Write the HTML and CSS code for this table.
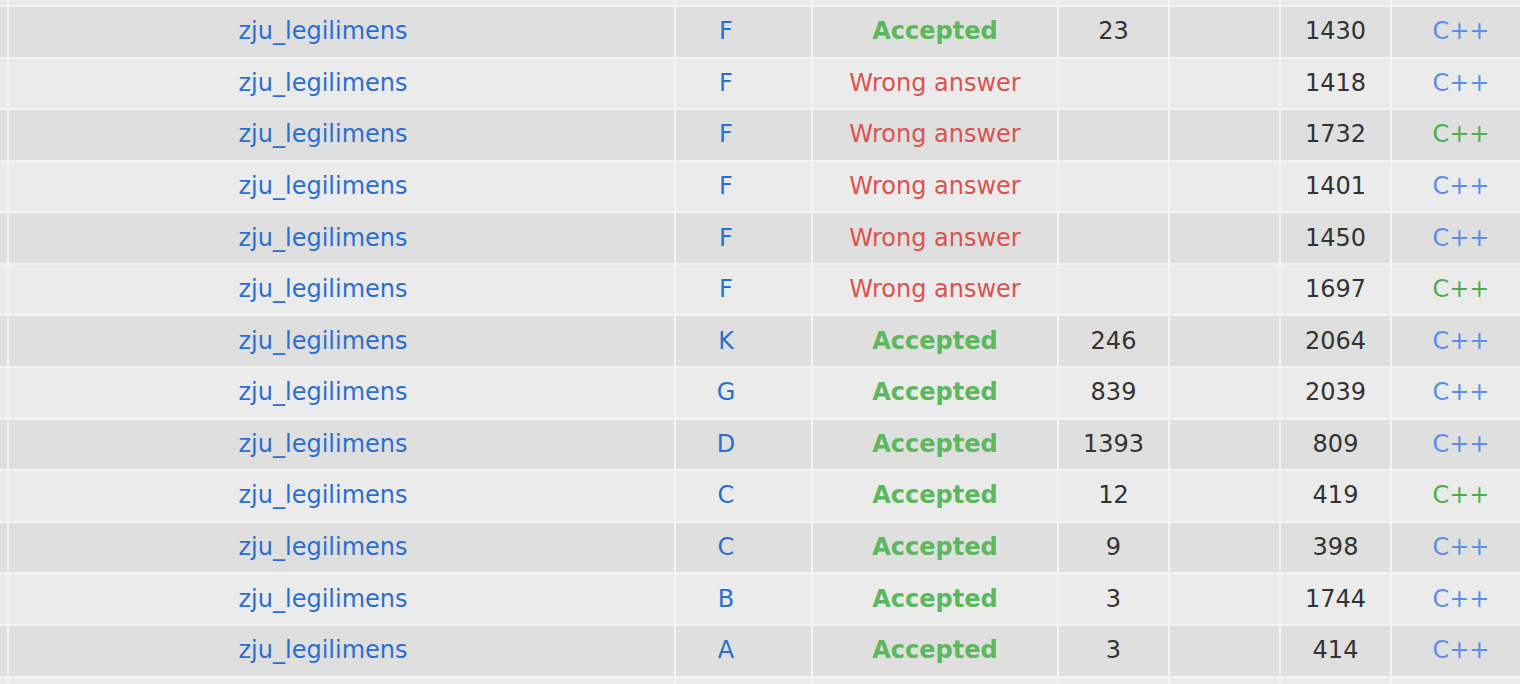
FILE: index.html
```html
<!DOCTYPE html>
<html>
<head>
<meta charset="utf-8">
<link rel="stylesheet" href="styles.css">
</head>
<body>
<div class="table">
  <div class="row light edge-top"><div class="c c0"></div><div class="c c1"></div><div class="c c2"></div><div class="c c3"></div><div class="c c4"></div><div class="c c5"></div><div class="c c6"></div><div class="c c7"></div></div>

  <div class="row dark"><div class="c c0"></div><div class="c c1"><a class="user">zju_legilimens</a></div><div class="c c2"><a class="prob">F</a></div><div class="c c3"><span class="ac">Accepted</span></div><div class="c c4">23</div><div class="c c5"></div><div class="c c6">1430</div><div class="c c7"><span class="lang">C++</span></div></div>
  <div class="row light"><div class="c c0"></div><div class="c c1"><a class="user">zju_legilimens</a></div><div class="c c2"><a class="prob">F</a></div><div class="c c3"><span class="wa">Wrong answer</span></div><div class="c c4"></div><div class="c c5"></div><div class="c c6">1418</div><div class="c c7"><span class="lang">C++</span></div></div>
  <div class="row dark"><div class="c c0"></div><div class="c c1"><a class="user">zju_legilimens</a></div><div class="c c2"><a class="prob">F</a></div><div class="c c3"><span class="wa">Wrong answer</span></div><div class="c c4"></div><div class="c c5"></div><div class="c c6">1732</div><div class="c c7"><span class="lang green">C++</span></div></div>
  <div class="row light"><div class="c c0"></div><div class="c c1"><a class="user">zju_legilimens</a></div><div class="c c2"><a class="prob">F</a></div><div class="c c3"><span class="wa">Wrong answer</span></div><div class="c c4"></div><div class="c c5"></div><div class="c c6">1401</div><div class="c c7"><span class="lang">C++</span></div></div>
  <div class="row dark"><div class="c c0"></div><div class="c c1"><a class="user">zju_legilimens</a></div><div class="c c2"><a class="prob">F</a></div><div class="c c3"><span class="wa">Wrong answer</span></div><div class="c c4"></div><div class="c c5"></div><div class="c c6">1450</div><div class="c c7"><span class="lang">C++</span></div></div>
  <div class="row light"><div class="c c0"></div><div class="c c1"><a class="user">zju_legilimens</a></div><div class="c c2"><a class="prob">F</a></div><div class="c c3"><span class="wa">Wrong answer</span></div><div class="c c4"></div><div class="c c5"></div><div class="c c6">1697</div><div class="c c7"><span class="lang green">C++</span></div></div>
  <div class="row dark"><div class="c c0"></div><div class="c c1"><a class="user">zju_legilimens</a></div><div class="c c2"><a class="prob">K</a></div><div class="c c3"><span class="ac">Accepted</span></div><div class="c c4">246</div><div class="c c5"></div><div class="c c6">2064</div><div class="c c7"><span class="lang">C++</span></div></div>
  <div class="row light"><div class="c c0"></div><div class="c c1"><a class="user">zju_legilimens</a></div><div class="c c2"><a class="prob">G</a></div><div class="c c3"><span class="ac">Accepted</span></div><div class="c c4">839</div><div class="c c5"></div><div class="c c6">2039</div><div class="c c7"><span class="lang">C++</span></div></div>
  <div class="row dark"><div class="c c0"></div><div class="c c1"><a class="user">zju_legilimens</a></div><div class="c c2"><a class="prob">D</a></div><div class="c c3"><span class="ac">Accepted</span></div><div class="c c4">1393</div><div class="c c5"></div><div class="c c6">809</div><div class="c c7"><span class="lang">C++</span></div></div>
  <div class="row light"><div class="c c0"></div><div class="c c1"><a class="user">zju_legilimens</a></div><div class="c c2"><a class="prob">C</a></div><div class="c c3"><span class="ac">Accepted</span></div><div class="c c4">12</div><div class="c c5"></div><div class="c c6">419</div><div class="c c7"><span class="lang green">C++</span></div></div>
  <div class="row dark"><div class="c c0"></div><div class="c c1"><a class="user">zju_legilimens</a></div><div class="c c2"><a class="prob">C</a></div><div class="c c3"><span class="ac">Accepted</span></div><div class="c c4">9</div><div class="c c5"></div><div class="c c6">398</div><div class="c c7"><span class="lang">C++</span></div></div>
  <div class="row light"><div class="c c0"></div><div class="c c1"><a class="user">zju_legilimens</a></div><div class="c c2"><a class="prob">B</a></div><div class="c c3"><span class="ac">Accepted</span></div><div class="c c4">3</div><div class="c c5"></div><div class="c c6">1744</div><div class="c c7"><span class="lang">C++</span></div></div>
  <div class="row dark"><div class="c c0"></div><div class="c c1"><a class="user">zju_legilimens</a></div><div class="c c2"><a class="prob">A</a></div><div class="c c3"><span class="ac">Accepted</span></div><div class="c c4">3</div><div class="c c5"></div><div class="c c6">414</div><div class="c c7"><span class="lang">C++</span></div></div>

  <div class="row light edge-bottom"><div class="c c0"></div><div class="c c1"></div><div class="c c2"></div><div class="c c3"></div><div class="c c4"></div><div class="c c5"></div><div class="c c6"></div><div class="c c7"></div></div>
</div>
</body>
</html>
```
FILE: styles.css
```css
html, body {
  margin: 0;
  padding: 0;
  background: #ececec;
  overflow: hidden;
  height: 684px;
}
.table {
  margin-top: -46.6px;
  width: 1540px;
  font-family: "DejaVu Sans", Verdana, sans-serif;
  font-size: 24px;
  color: #333333;
}
.row {
  display: grid;
  grid-template-columns: 7px 667px 137px 246px 111px 111px 111px 150px;
  height: 51.58px;
  box-sizing: border-box;
  border-top: 2px solid #f4f4f4;
}
.row.edge-top {
  border-top: none;
}
.row.edge-bottom {
  height: 20px;
}
.dark { background: #dfdfdf; }
.light { background: #ebebeb; }
.c {
  border-left: 2px solid #f4f4f4;
  display: flex;
  align-items: center;
  justify-content: center;
  white-space: nowrap;
  padding-bottom: 1px;
}
.c0 { border-left: none; }
.c1 { padding-right: 37px; }
.c2 { padding-right: 35px; }
.c7 { padding-right: 10px; }
.user, .prob { color: #2a6fcf; text-decoration: none; }
.ac { color: #5cb85c; font-weight: bold; }
.wa { color: #d9534f; }
.lang { color: #5b8ee6; }
.lang.green { color: #4cae4c; }
```
